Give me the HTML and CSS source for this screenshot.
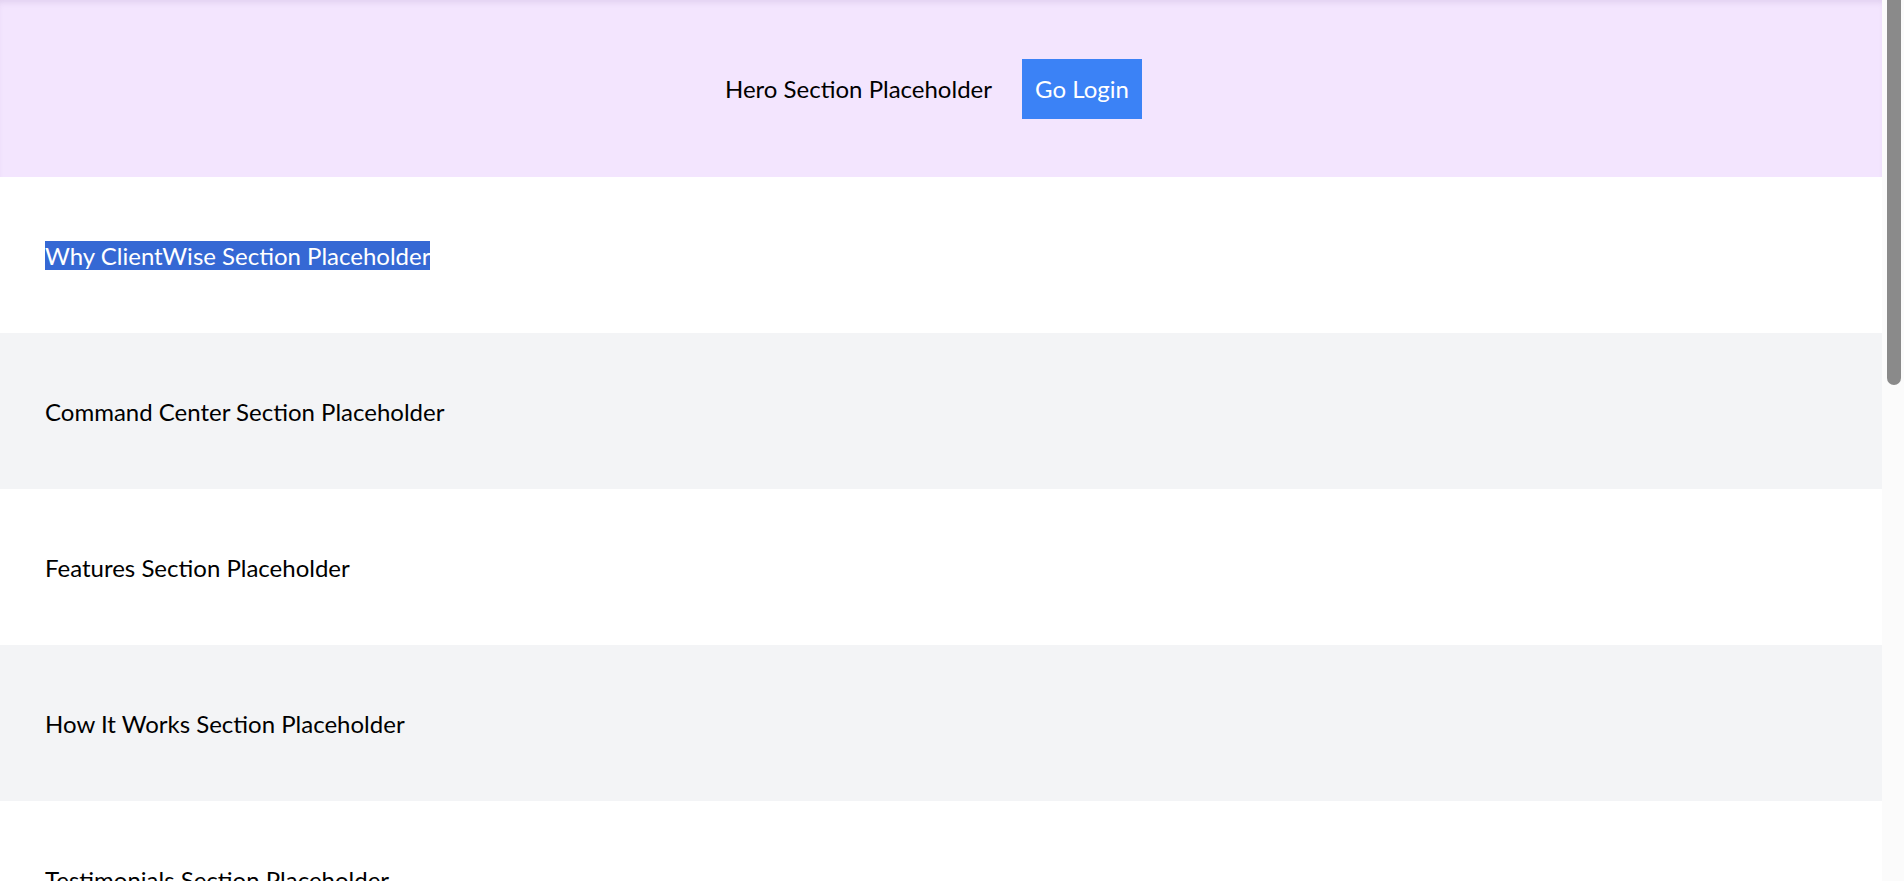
FILE: index.html
```html
<!DOCTYPE html>
<html lang="en">
<head>
<meta charset="utf-8">
<title>ClientWise</title>
<link rel="stylesheet" href="styles.css">
</head>
<body>
<main class="page">
  <section class="hero">
    <div class="hero-inner">
      <p class="hero-text">Hero Section Placeholder</p>
      <button class="hero-btn" type="button">Go Login</button>
    </div>
  </section>
  <section class="block"><p class="block-text"><span class="selected">Why ClientWise Section Placeholder</span></p></section>
  <section class="block alt"><p class="block-text">Command Center Section Placeholder</p></section>
  <section class="block"><p class="block-text">Features Section Placeholder</p></section>
  <section class="block alt"><p class="block-text">How It Works Section Placeholder</p></section>
  <section class="block"><p class="block-text">Testimonials Section Placeholder</p></section>
  <section class="block alt"><p class="block-text">Pricing Section Placeholder</p></section>
  <section class="block"><p class="block-text">Integrations Section Placeholder</p></section>
  <section class="block alt"><p class="block-text">Security Section Placeholder</p></section>
  <section class="block"><p class="block-text">FAQ Section Placeholder</p></section>
  <section class="block alt"><p class="block-text">Call To Action Section Placeholder</p></section>
  <footer class="footer"><p class="block-text">Footer Placeholder</p></footer>
</main>
<div class="scrollbar" aria-hidden="true"><div class="scrollbar-thumb"></div></div>
</body>
</html>
```

FILE: styles.css
```css
html, body {
  margin: 0;
  padding: 0;
}

html {
  scrollbar-width: none;
}

body {
  font-family: "Lato", "Open Sans", sans-serif;
  font-size: 24px;
  line-height: 36px;
  color: #000;
  background: #fff;
  padding-right: 22px;
}

.page {
  display: flex;
  flex-direction: column;
}

.hero {
  background: #f3e5fe;
  height: 177px;
  display: flex;
  align-items: center;
  justify-content: center;
  padding-right: 15px;
  box-shadow: inset 0 5px 6px -3px rgba(80, 40, 120, 0.12);
  box-sizing: border-box;
}

.hero-inner {
  display: flex;
  align-items: center;
  gap: 30px;
}

.hero-text {
  margin: 0;
}

.hero-btn {
  font: inherit;
  line-height: 36px;
  color: #fff;
  background: #3b82f6;
  border: none;
  padding: 12px;
  width: 120px;
  height: 60px;
  cursor: pointer;
}

.block {
  padding: 61px 45px 59px;
  background: #fff;
}

.block.alt {
  background: #f3f4f6;
}

.block-text {
  margin: 0;
}

.selected {
  background: #3568d4;
  color: #fff;
}

.footer {
  padding: 61px 45px 62px;
  background: #fff;
}

.scrollbar {
  position: fixed;
  top: 0;
  right: 0;
  width: 22px;
  height: 100vh;
  background: #fbfbfb;
}

.scrollbar-thumb {
  margin-left: 5px;
  width: 14px;
  height: 385px;
  background: #8a8a8a;
  border-radius: 0 0 7px 7px;
}
```
